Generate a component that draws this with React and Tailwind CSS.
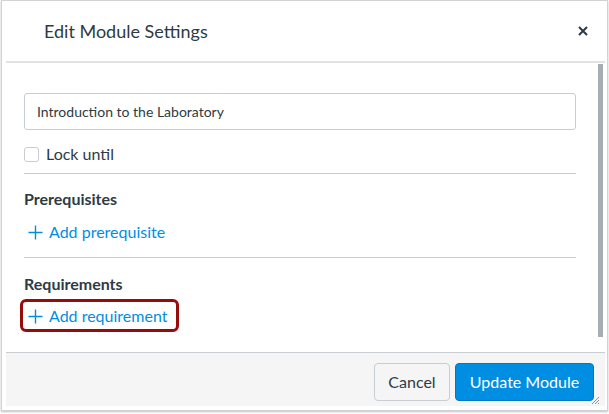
import React from 'react';

const PlusIcon = () => (
    <svg width="15" height="15" viewBox="0 0 15 15" className="shrink-0">
        <path d="M7.5 0.5v14M0.5 7.5h14" stroke="#008EE2" strokeWidth="1.4" fill="none" />
    </svg>
);

const AddLink = ({ label }) => (
    <a className="flex items-center gap-[6px] pl-[4px] text-[16px] leading-[20px] text-[#008EE2] cursor-pointer">
        <PlusIcon />
        <span>{label}</span>
    </a>
);

const App = () => {
    return (
        <div className="w-[609px] h-[414px] bg-white" style={{ fontFamily: 'Lato, "Liberation Sans", sans-serif' }}>
            <div className="ml-[1px] w-[607px] h-[411px] border border-[#cfd3d6] shadow-[0_1px_2px_rgba(0,0,0,0.25)] pl-[4px] pr-[2px] flex flex-col text-[#2D3B45]">
                {/* Header */}
                <div className="h-[62px] shrink-0 flex items-center justify-between pl-[38px] pr-[17px] border-b-2 border-[#dfe3e6]">
                    <h2 className="text-[18px] font-normal">Edit Module Settings</h2>
                    <button className="w-[10px] h-[10px] flex items-center justify-center">
                        <svg width="10" height="10" viewBox="0 0 10 10">
                            <path d="M1 1l8 8M9 1l-8 8" stroke="#2D3B45" strokeWidth="2" />
                        </svg>
                    </button>
                </div>

                {/* Body */}
                <div className="h-[289px] shrink-0 flex">
                    <div className="flex-1 pl-[18px] pr-[22px] pt-[30px]">
                        <input
                            readOnly
                            value="Introduction to the Laboratory"
                            className="w-full h-[37px] px-[12px] text-[14px] text-[#2D3B45] border border-[#c7cdd1] rounded-[3px] outline-none"
                        />
                        <label className="mt-[14px] flex items-center gap-[7px] h-[20px] text-[16px]">
                            <span className="w-[15px] h-[15px] border border-[#c7cdd1] rounded-[3px] bg-white" />
                            Lock until
                        </label>
                        <div className="mt-[9px] border-t border-[#c7cdd1]" />

                        <h3 className="mt-[15px] text-[16px] leading-[20px] font-bold">Prerequisites</h3>
                        <div className="mt-[13px]">
                            <AddLink label="Add prerequisite" />
                        </div>
                        <div className="mt-[15px] border-t border-[#c7cdd1]" />

                        <h3 className="mt-[16px] text-[16px] leading-[20px] font-bold">Requirements</h3>
                        <div className="mt-[12px] relative w-fit">
                            <AddLink label="Add requirement" />
                            <div className="absolute -left-[4px] -top-[7px] w-[159px] h-[33px] border-[3px] border-[#970b0b] rounded-[6px]" />
                        </div>
                    </div>
                    <div className="w-[5px] mt-[1px]">
                        <div className="h-[273px] bg-[#a6adb3]" />
                    </div>
                    <div className="w-[2px]" />
                </div>

                {/* Footer */}
                <div className="relative h-[54px] shrink-0 bg-[#f5f5f5] border-t border-[#c7cdd1] flex justify-end items-start gap-[5px] pt-[10px] pr-[11px]">
                    <button className="h-[38px] w-[76px] rounded-[4px] bg-[#f5f5f5] border border-[#c7cdd1] text-[16px] text-[#2D3B45]">
                        Cancel
                    </button>
                    <button className="h-[38px] w-[139px] rounded-[4px] bg-[#008EE2] border border-[#0079c1] text-[16px] text-white">
                        Update Module
                    </button>
                    <svg className="absolute right-[5px] bottom-[1px]" width="9" height="9" viewBox="0 0 9 9">
                        <path d="M8 1L1 8M8 4L4 8M8 7L7 8" stroke="#8a9095" strokeWidth="1" />
                    </svg>
                </div>
            </div>
        </div>
    );
};

export default App;
